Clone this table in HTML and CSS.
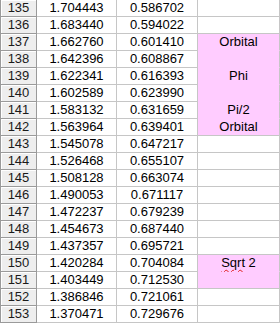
FILE: index.html
```html
<!DOCTYPE html>
<html>
<head>
<meta charset="utf-8">
<link rel="stylesheet" href="styles.css">
</head>
<body>
<div class="sheet">
  <div class="rh">135</div><div class="c">1.704443</div><div class="c">0.586702</div><div class="c t"></div>
  <div class="rh">136</div><div class="c">1.683440</div><div class="c">0.594022</div><div class="c t"></div>
  <div class="rh">137</div><div class="c">1.662760</div><div class="c">0.601410</div><div class="c t pink">Orbital</div>
  <div class="rh">138</div><div class="c">1.642396</div><div class="c">0.608867</div><div class="c t pink"></div>
  <div class="rh">139</div><div class="c">1.622341</div><div class="c">0.616393</div><div class="c t pink">Phi</div>
  <div class="rh">140</div><div class="c">1.602589</div><div class="c">0.623990</div><div class="c t pink"></div>
  <div class="rh">141</div><div class="c">1.583132</div><div class="c">0.631659</div><div class="c t pink">Pi/2</div>
  <div class="rh">142</div><div class="c">1.563964</div><div class="c">0.639401</div><div class="c t pink last">Orbital</div>
  <div class="rh">143</div><div class="c">1.545078</div><div class="c">0.647217</div><div class="c t"></div>
  <div class="rh">144</div><div class="c">1.526468</div><div class="c">0.655107</div><div class="c t"></div>
  <div class="rh">145</div><div class="c">1.508128</div><div class="c">0.663074</div><div class="c t"></div>
  <div class="rh">146</div><div class="c">1.490053</div><div class="c">0.671117</div><div class="c t"></div>
  <div class="rh">147</div><div class="c">1.472237</div><div class="c">0.679239</div><div class="c t"></div>
  <div class="rh">148</div><div class="c">1.454673</div><div class="c">0.687440</div><div class="c t"></div>
  <div class="rh">149</div><div class="c">1.437357</div><div class="c">0.695721</div><div class="c t"></div>
  <div class="rh">150</div><div class="c">1.420284</div><div class="c">0.704084</div><div class="c t pink"><span><span class="sq">Sqrt</span> 2</span></div>
  <div class="rh">151</div><div class="c">1.403449</div><div class="c">0.712530</div><div class="c t pink last"></div>
  <div class="rh">152</div><div class="c">1.386846</div><div class="c">0.721061</div><div class="c t"></div>
  <div class="rh">153</div><div class="c">1.370471</div><div class="c">0.729676</div><div class="c t"></div>
</div>
</body>
</html>
```
FILE: styles.css
```css
html, body {
  margin: 0;
  padding: 0;
  background: #ffffff;
}
.sheet {
  display: grid;
  grid-template-columns: 37px 80px 81px 82px;
  grid-auto-rows: 17px;
  width: 280px;
  font-family: "Liberation Sans", Arial, sans-serif;
  font-size: 13px;
  color: #000;
}
.sheet > div {
  box-sizing: border-box;
  display: flex;
  align-items: center;
  justify-content: center;
  line-height: 16px;
  white-space: nowrap;
}
.rh {
  background: #eeeeee;
  border-left: 1px solid #9a9a9a;
  border-right: 1px solid #9a9a9a;
  border-bottom: 1px solid #9a9a9a;
  box-shadow: inset 1px 1px 0 #ffffff;
  color: #1a1a1a;
}
.c {
  border-right: 1px solid #c6c6c6;
  border-bottom: 1px solid #c6c6c6;
}
.pink {
  background: #ffccff;
  border-bottom-color: #ffccff;
}
.pink.last {
  border-bottom-color: #c6c6c6;
}
.sq {
  text-decoration: underline wavy #e02020;
  text-decoration-thickness: 1px;
  text-underline-offset: 2px;
}
```
